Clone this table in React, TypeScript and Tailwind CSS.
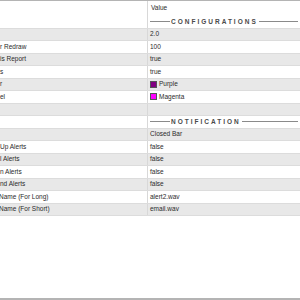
import React from "react";

type Row = { l?: string; lm?: number; v?: string; swatch?: string; gray: boolean; section?: string };

const rows: Row[] = [
  { section: "CONFIGURATIONS", gray: false },
  { l: "", v: "2.0", gray: true },
  { l: "r Redraw", v: "100", gray: false },
  { l: "is Report", v: "true", gray: true },
  { l: "s", v: "true", gray: false },
  { l: "r", v: "Purple", swatch: "#800080", gray: true },
  { l: "el", v: "Magenta", swatch: "#ff00ff", gray: false },
  { l: "", v: "", gray: true },
  { section: "NOTIFICATION", gray: false },
  { l: "", v: "Closed Bar", gray: true },
  { l: "Up Alerts", v: "false", gray: false },
  { l: "l Alerts", v: "false", gray: true },
  { l: "n Alerts", v: "false", gray: false },
  { l: "nd Alerts", v: "false", gray: true },
  { l: "Name (For Long)", lm: -1, v: "alert2.wav", gray: false },
  { l: "Name (For Short)", lm: -1, v: "email.wav", gray: true },
];

export default function App() {
  return (
    <div
      className="w-[300px] h-[300px] bg-white flex flex-col border-t border-[#b4b4b4] text-[6.5px] text-[#2a2a2a] overflow-hidden"
      style={{ fontFamily: '"Liberation Sans", Arial, sans-serif' }}
    >
      <div className="h-[14.5px] flex shrink-0">
        <div className="w-[148px] border-r border-[#d8d8d8]" />
        <div className="flex-1 pl-[3px] flex items-center">Value</div>
      </div>
      {rows.map((r, i) => (
        <div
          key={i}
          className={
            "h-[12.5px] flex shrink-0 " +
            (r.gray ? "bg-[#e8e8e8] border-y border-[#dcdcdc]" : "bg-white")
          }
        >
          <div className="w-[148px] border-r border-[#d8d8d8] overflow-hidden flex items-center whitespace-nowrap">
            <span style={r.lm ? { marginLeft: r.lm } : undefined}>{r.l}</span>
          </div>
          {r.section ? (
            <div className="flex-1 flex items-center pl-[2px] pr-[2px]">
              <div className="w-[20px] border-t border-[#8a8a8a]" />
              <span className="px-[1px] tracking-[2px] text-[#4a4a4a] font-bold text-[6.5px]">{r.section}</span>
              <div className="flex-1 border-t border-[#8a8a8a]" />
            </div>
          ) : (
            <div className="flex-1 flex items-center pl-[2px] gap-[2px] whitespace-nowrap">
              {r.swatch && (
                <span
                  className="inline-block w-[7px] h-[7px] border border-[#555]"
                  style={{ backgroundColor: r.swatch }}
                />
              )}
              <span>{r.v}</span>
            </div>
          )}
        </div>
      ))}
      <div className="flex-1" />
      <div className="h-[2px] bg-[#b4b4b4] shrink-0" />
    </div>
  );
}
